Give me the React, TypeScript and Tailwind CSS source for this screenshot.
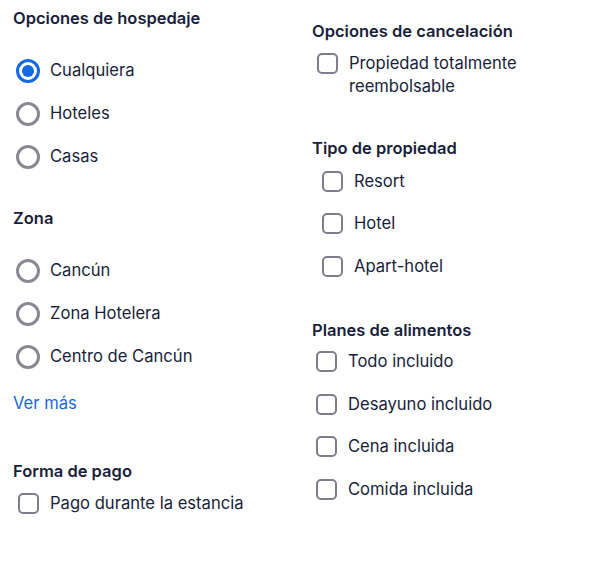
import React from "react";

function Radio({ label, checked = false }: { label: string; checked?: boolean }) {
  return (
    <div className="flex h-[43px] items-center">
      <div className="ml-[3px] flex h-[24px] w-[24px] shrink-0 items-center justify-center rounded-full">
        {checked ? (
          <div className="flex h-[24px] w-[24px] items-center justify-center rounded-full border-[3px] border-[#1668e3]">
            <div className="h-[12px] w-[12px] rounded-full bg-[#1668e3]" />
          </div>
        ) : (
          <div className="h-[24px] w-[24px] rounded-full border-[3px] border-[#878a95]" />
        )}
      </div>
      <span className="ml-[10px] text-[16.6px] leading-[23px]">{label}</span>
    </div>
  );
}

function Check({
  label,
  indent,
  gap = "ml-[11px]",
  height = "h-[42.5px]",
}: {
  label: string;
  indent: string;
  gap?: string;
  height?: string;
}) {
  return (
    <div className={`flex ${height} items-center`}>
      <div className={`${indent} h-[21px] w-[21px] shrink-0 rounded-[5px] border-2 border-[#7c7f8b]`} />
      <span className={`${gap} text-[16.6px] leading-[23px]`}>{label}</span>
    </div>
  );
}

function Heading({ children }: { children: React.ReactNode }) {
  return <h2 className="h-[24px] text-[16.5px] font-semibold leading-[24px]">{children}</h2>;
}

export default function App() {
  return (
    <div
      className="flex h-[582px] w-[598px] bg-white text-[#191e3b]"
      style={{ fontFamily: "Inter, 'Liberation Sans', sans-serif" }}
    >
      <div className="flex w-[312px] shrink-0 flex-col pl-[13px] pt-[6px]">
        <Heading>Opciones de hospedaje</Heading>
        <div className="mt-[19px] flex flex-col">
          <Radio label="Cualquiera" checked />
          <Radio label="Hoteles" />
          <Radio label="Casas" />
        </div>
        <div className="mt-[28px]">
          <Heading>Zona</Heading>
        </div>
        <div className="mt-[19px] flex flex-col">
          <Radio label="Cancún" />
          <Radio label="Zona Hotelera" />
          <Radio label="Centro de Cancún" />
        </div>
        <a className="mt-[13px] block h-[24px] text-[16.6px] leading-[24px] text-[#1668e3]" href="#">
          Ver más
        </a>
        <div className="mt-[44px]">
          <Heading>Forma de pago</Heading>
        </div>
        <div className="mt-[8px]">
          <Check label="Pago durante la estancia" indent="ml-[5px]" gap="ml-[11px]" height="h-[24px]" />
        </div>
      </div>

      <div className="flex w-[272px] flex-col pt-[19px]">
        <Heading>Opciones de cancelación</Heading>
        <div className="mt-[9px] flex items-start">
          <div className="ml-[5px] mt-[1px] h-[21px] w-[21px] shrink-0 rounded-[5px] border-2 border-[#7c7f8b]" />
          <span className="ml-[11px] text-[16.6px] leading-[23px]">Propiedad totalmente reembolsable</span>
        </div>
        <div className="mt-[38px]">
          <Heading>Tipo de propiedad</Heading>
        </div>
        <div className="flex flex-col">
          <Check label="Resort" indent="ml-[10px]" />
          <Check label="Hotel" indent="ml-[10px]" />
          <Check label="Apart-hotel" indent="ml-[10px]" />
        </div>
        <div className="mt-[30px]">
          <Heading>Planes de alimentos</Heading>
        </div>
        <div className="-mt-[1px] flex flex-col">
          <Check label="Todo incluido" indent="ml-[4px]" />
          <Check label="Desayuno incluido" indent="ml-[4px]" />
          <Check label="Cena incluida" indent="ml-[4px]" />
          <Check label="Comida incluida" indent="ml-[4px]" />
        </div>
      </div>
    </div>
  );
}
